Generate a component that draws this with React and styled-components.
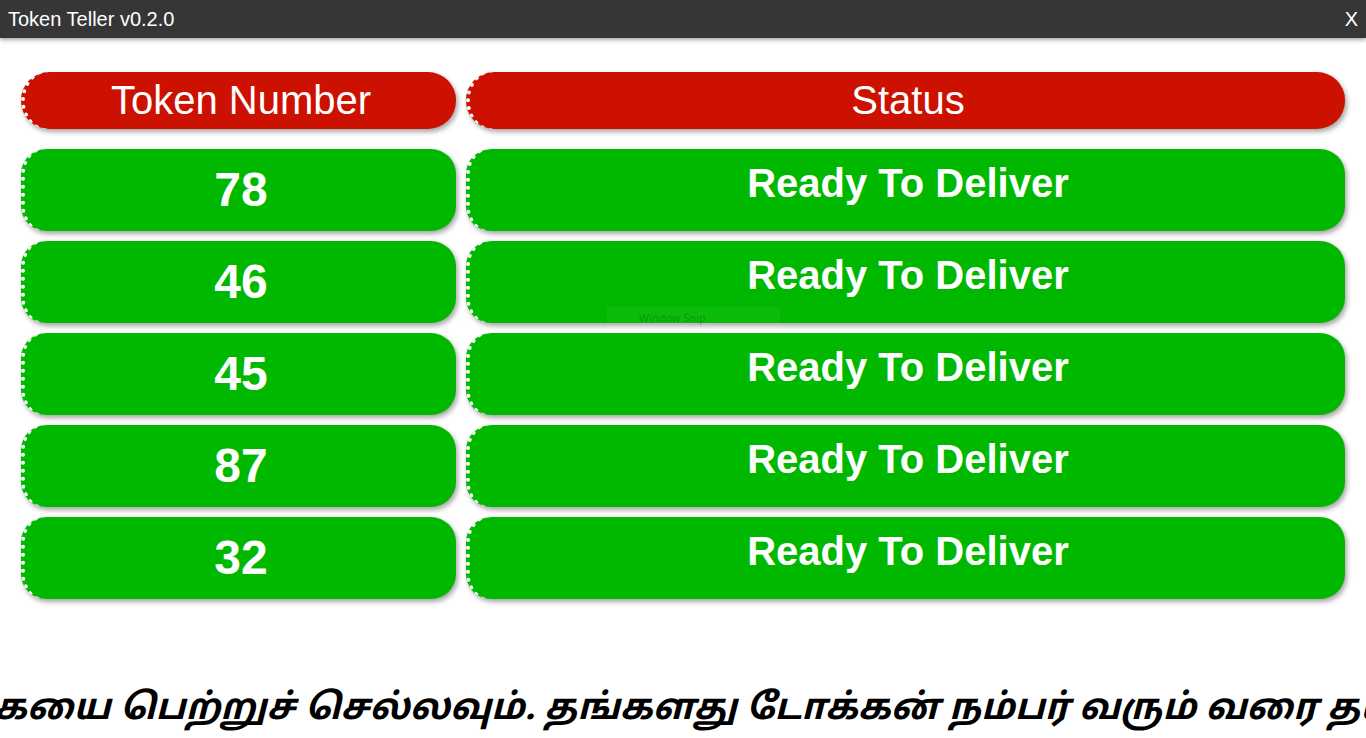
import React from "react";
import styled, { createGlobalStyle } from "styled-components";

const Global = createGlobalStyle`
  html, body { margin: 0; padding: 0; background: #ffffff; }
  body { font-family: "Liberation Sans", Arial, sans-serif; overflow: hidden; }
  #root { width: 1366px; height: 738px; }
`;

const Page = styled.div`
  width: 1366px;
  height: 738px;
  display: flex;
  flex-direction: column;
  position: relative;
  overflow: hidden;
`;

const TitleBar = styled.div`
  height: 38px;
  flex: none;
  background: #363636;
  color: #ffffff;
  display: flex;
  align-items: center;
  justify-content: space-between;
  padding: 0 8px 0 8px;
  font-size: 20px;
  box-shadow: 0 2px 4px rgba(0, 0, 0, 0.35);
  position: relative;
  z-index: 2;
`;

const CloseButton = styled.span`
  font-size: 20px;
  cursor: pointer;
`;

const Board = styled.div`
  display: grid;
  grid-template-columns: 435px 1fr;
  column-gap: 10px;
  row-gap: 10px;
  padding: 34px 21px 0 21px;
`;

const Cell = styled.div`
  box-sizing: border-box;
  height: ${(p) => (p.$head ? "57px" : "82px")};
  margin-bottom: ${(p) => (p.$head ? "10px" : "0")};
  background: ${(p) => (p.$head ? "#cc1100" : "#00b800")};
  border-radius: ${(p) => (p.$head ? "28px" : "25px")};
  border-left: 4px dotted #ffffff;
  box-shadow: 2px 3px 5px rgba(0, 0, 0, 0.35);
  color: #ffffff;
  display: flex;
  align-items: center;
  justify-content: center;
  font-size: ${(p) => (p.$num ? "48px" : "40px")};
  font-weight: ${(p) => (p.$head ? "400" : "700")};
  padding-bottom: ${(p) => (p.$status ? "14px" : p.$num ? "2px" : "0")};
  padding-left: 1px;
`;

const Ticker = styled.div`
  margin-top: auto;
  height: 80px;
  box-sizing: border-box;
  display: flex;
  align-items: center;
  overflow: hidden;
  white-space: nowrap;
  padding-top: 24px;
`;

const TickerText = styled.div`
  font-family: "Noto Sans Tamil", "Lohit Tamil", "Latha", "Noto Sans", sans-serif;
  font-size: 36px;
  font-style: italic;
  font-weight: 700;
  color: #000000;
  text-indent: -6px;
`;

const SnipHint = styled.div`
  position: absolute;
  left: 607px;
  top: 307px;
  width: 173px;
  height: 21px;
  background: rgba(255, 255, 255, 0.05);
  color: rgba(0, 80, 0, 0.35);
  font-family: "Open Sans", sans-serif;
  font-size: 11px;
  line-height: 21px;
  padding-left: 32px;
  box-sizing: border-box;
`;

const tokens = [78, 46, 45, 87, 32];

export default function App() {
  return (
    <Page>
      <Global />
      <TitleBar>
        <span>Token Teller v0.2.0</span>
        <CloseButton>X</CloseButton>
      </TitleBar>
      <Board>
        <Cell $head>Token Number</Cell>
        <Cell $head>Status</Cell>
        {tokens.map((t) => (
          <React.Fragment key={t}>
            <Cell $num>{t}</Cell>
            <Cell $status>Ready To Deliver</Cell>
          </React.Fragment>
        ))}
      </Board>
      <Ticker>
        <TickerText>
          கயை பெற்றுச் செல்லவும். தங்களது டோக்கன் நம்பர் வரும் வரை தயவுசெய்து காத்திருக்கவும்.
        </TickerText>
      </Ticker>
      <SnipHint>Window Snip</SnipHint>
    </Page>
  );
}
